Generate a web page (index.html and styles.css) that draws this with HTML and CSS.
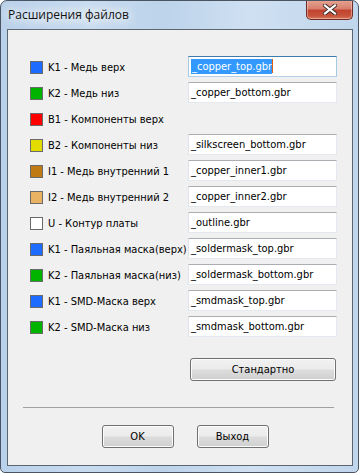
FILE: index.html
```html
<!DOCTYPE html>
<html lang="ru">
<head>
<meta charset="utf-8">
<title>Расширения файлов</title>
<link rel="stylesheet" href="styles.css">
</head>
<body>
<div class="window">
  <div class="titlebar">
    <span class="title">Расширения файлов</span>
    <button class="close" aria-label="Закрыть">
      <svg width="14" height="11" viewBox="0 0 14 11">
        <path d="M2 1.5 L12 9.5 M12 1.5 L2 9.5" stroke="#3b2a28" stroke-width="4" stroke-linecap="square"/>
        <path d="M2 1.5 L12 9.5 M12 1.5 L2 9.5" stroke="#ffffff" stroke-width="2.2" stroke-linecap="square"/>
      </svg>
    </button>
  </div>
  <div class="client">
    <div class="rows">
      <div class="label"><span class="sw sw-blue"></span>K1 - Медь верх</div>
      <div class="field focused"><span class="sel">_copper_top.gbr</span><span class="caret"></span></div>

      <div class="label"><span class="sw sw-green"></span>K2 - Медь низ</div>
      <div class="field">_copper_bottom.gbr</div>

      <div class="label"><span class="sw sw-red"></span>B1 - Компоненты верх</div>
      <div class="empty"></div>

      <div class="label"><span class="sw sw-yellow"></span>B2 - Компоненты низ</div>
      <div class="field">_silkscreen_bottom.gbr</div>

      <div class="label"><span class="sw sw-brown"></span>I1 - Медь внутренний 1</div>
      <div class="field">_copper_inner1.gbr</div>

      <div class="label"><span class="sw sw-tan"></span>I2 - Медь внутренний 2</div>
      <div class="field">_copper_inner2.gbr</div>

      <div class="label"><span class="sw sw-white"></span>U - Контур платы</div>
      <div class="field">_outline.gbr</div>

      <div class="label"><span class="sw sw-blue"></span>K1 - Паяльная маска(верх)</div>
      <div class="field">_soldermask_top.gbr</div>

      <div class="label"><span class="sw sw-green"></span>K2 - Паяльная маска(низ)</div>
      <div class="field">_soldermask_bottom.gbr</div>

      <div class="label"><span class="sw sw-blue"></span>K1 - SMD-Маска верх</div>
      <div class="field">_smdmask_top.gbr</div>

      <div class="label"><span class="sw sw-green"></span>K2 - SMD-Маска низ</div>
      <div class="field">_smdmask_bottom.gbr</div>
    </div>
    <div class="std-row">
      <button class="btn btn-std">Стандартно</button>
    </div>
    <div class="separator"></div>
    <div class="footer">
      <button class="btn btn-foot">OK</button>
      <button class="btn btn-foot">Выход</button>
    </div>
  </div>
</div>
</body>
</html>
```
FILE: styles.css
```css
html, body {
  margin: 0;
  padding: 0;
  background: #ffffff;
}
body {
  width: 359px;
  height: 473px;
  overflow: hidden;
  font-family: "DejaVu Sans Condensed", "Liberation Sans", sans-serif;
  font-size: 11px;
  color: #000;
}
.window {
  box-sizing: border-box;
  width: 359px;
  height: 473px;
  border: 1px solid #4a5563;
  border-radius: 7px 7px 5px 5px;
  background: linear-gradient(90deg, #b9d1ea 0%, #c8dcf0 25%, #bcd3ea 45%, #cfe0f2 70%, #c0d6ec 100%);
  display: flex;
  flex-direction: column;
  overflow: hidden;
}
.titlebar {
  height: 28px;
  position: relative;
  display: flex;
  align-items: center;
  padding-left: 7px;
}
.title {
  font-family: "Open Sans", "Noto Sans", sans-serif;
  font-size: 12px;
  color: #111;
  margin-top: -2px;
  text-shadow: 0 0 8px #ffffff, 0 0 12px #ffffff, 0 0 16px #f4f8fc;
}
.close {
  position: absolute;
  top: -1px;
  right: 5px;
  width: 47px;
  height: 20px;
  border: 1px solid #6b2d25;
  border-top: none;
  border-radius: 0 0 5px 5px;
  padding: 0;
  background: linear-gradient(180deg, #e6a494 0%, #d8806d 45%, #c2432f 55%, #c8553f 85%, #d97b5f 100%);
  box-shadow: inset 0 0 0 1px rgba(255, 210, 200, 0.5);
  display: flex;
  align-items: center;
  justify-content: center;
}
.client {
  flex: 1;
  margin: 0 5px 6px 6px;
  border: 1px solid #5d6670;
  background: #f0f0f0;
  padding: 24px 14px 17px 0;
  display: flex;
  flex-direction: column;
  align-items: stretch;
}
.rows {
  display: grid;
  grid-template-columns: 180px 149px;
  grid-auto-rows: 26px;
  align-items: center;
}
.label {
  display: flex;
  align-items: center;
  padding-left: 22px;
  white-space: nowrap;
  overflow: hidden;
}
.sw {
  box-sizing: border-box;
  width: 13px;
  height: 13px;
  border: 1px solid #6a6a6a;
  margin-right: 5px;
  flex: none;
}
.sw-blue { background: #1e6cff; }
.sw-green { background: #00b400; }
.sw-red { background: #ff0000; }
.sw-yellow { background: #e2dc00; }
.sw-brown { background: #c07a14; }
.sw-tan { background: #eab364; }
.sw-white { background: #ffffff; }
.field {
  box-sizing: border-box;
  height: 21px;
  margin-top: -2px;
  background: #fff;
  border: 1px solid #e3e9ef;
  border-top-color: #abadb3;
  border-left-color: #e2e3ea;
  padding: 0 3px 0 2px;
  display: flex;
  align-items: center;
  white-space: nowrap;
  overflow: hidden;
}
.field.focused {
  border-color: #b5cfe7;
  border-top-color: #3d7bad;
  border-left-color: #a4c9e3;
  border-right-color: #a4c9e3;
}
.sel {
  background: #3399ff;
  color: #fff;
  padding: 1px 0 1px 1px;
}
.caret {
  width: 1px;
  height: 14px;
  background: #e06010;
}
.std-row {
  display: flex;
  justify-content: flex-end;
  margin-top: 18px;
  padding-right: 2px;
}
.btn {
  box-sizing: border-box;
  height: 23px;
  border: 1px solid #707070;
  border-radius: 3px;
  background: linear-gradient(180deg, #f2f2f2 0%, #ebebeb 49%, #dddddd 51%, #cfcfcf 100%);
  box-shadow: inset 0 0 0 1px #fcfcfc;
  font-family: "DejaVu Sans Condensed", "Liberation Sans", sans-serif;
  font-size: 11px;
  color: #000;
  padding: 0;
}
.btn-std {
  width: 146px;
}
.separator {
  align-self: flex-start;
  width: 311px;
  height: 1px;
  background: #a0a0a0;
  margin-top: 26px;
  margin-left: 15px;
}
.footer {
  display: flex;
  justify-content: center;
  gap: 23px;
  margin-top: 17px;
  padding-left: 24px;
}
.btn-foot {
  width: 72px;
}
```
